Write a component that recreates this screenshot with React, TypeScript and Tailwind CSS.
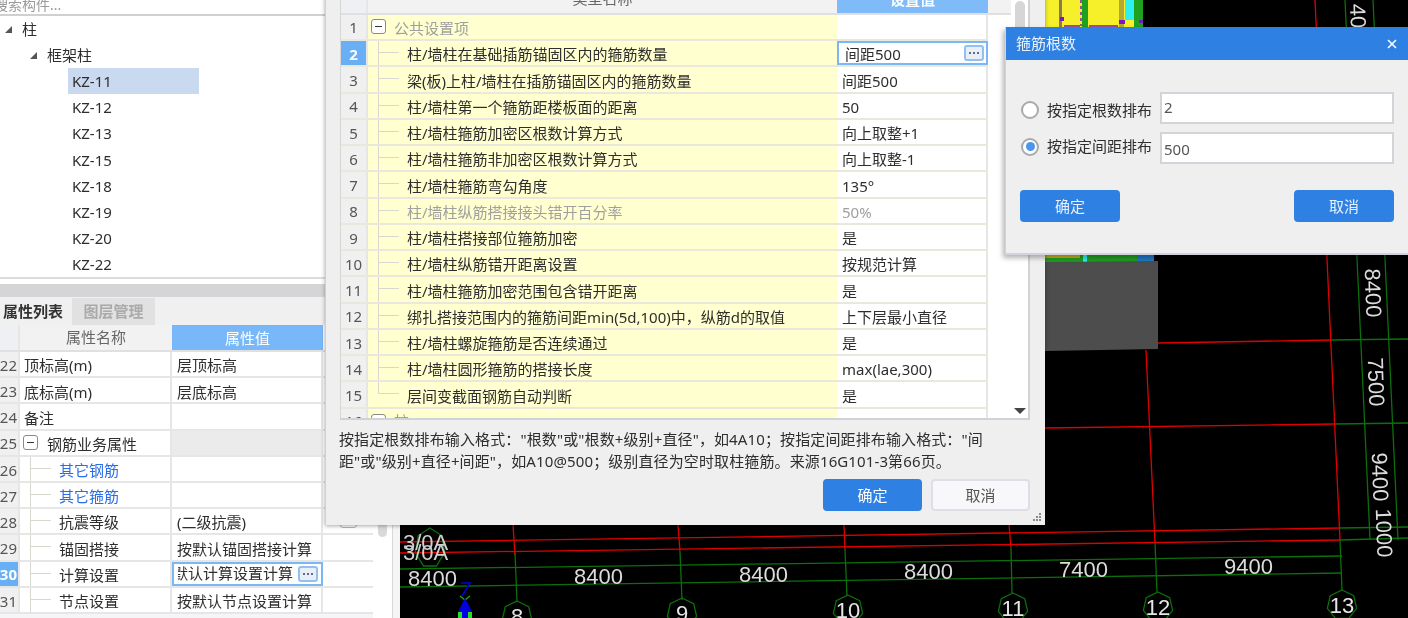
const FONT = "[font-family:'Noto_Sans','Noto_Sans_CJK_SC',sans-serif]";

const kzList = ["KZ-11", "KZ-12", "KZ-13", "KZ-15", "KZ-18", "KZ-19", "KZ-20", "KZ-22"];

const settings: [string, string][] = [
  ["柱/墙柱在基础插筋锚固区内的箍筋数量", "间距500"],
  ["梁(板)上柱/墙柱在插筋锚固区内的箍筋数量", "间距500"],
  ["柱/墙柱第一个箍筋距楼板面的距离", "50"],
  ["柱/墙柱箍筋加密区根数计算方式", "向上取整+1"],
  ["柱/墙柱箍筋非加密区根数计算方式", "向上取整-1"],
  ["柱/墙柱箍筋弯勾角度", "135°"],
  ["柱/墙柱纵筋搭接接头错开百分率", "50%"],
  ["柱/墙柱搭接部位箍筋加密", "是"],
  ["柱/墙柱纵筋错开距离设置", "按规范计算"],
  ["柱/墙柱箍筋加密范围包含错开距离", "是"],
  ["绑扎搭接范围内的箍筋间距min(5d,100)中，纵筋d的取值", "上下层最小直径"],
  ["柱/墙柱螺旋箍筋是否连续通过", "是"],
  ["柱/墙柱圆形箍筋的搭接长度", "max(lae,300)"],
  ["层间变截面钢筋自动判断", "是"],
];

function Minus({ empty = false }: { empty?: boolean }) {
  return (
    <span className="flex h-[15px] w-[15px] shrink-0 items-center justify-center rounded-[3px] border border-[#8a8a8a] bg-white">
      {!empty && <span className="h-px w-[7px] bg-[#333]" />}
    </span>
  );
}

function Dots() {
  return (
    <span className="flex h-[16px] w-[20px] shrink-0 items-center justify-center gap-[2px] rounded-[3px] border-2 border-[#8fc1f4] bg-[#e9eef7]">
      <span className="h-[2px] w-[2px] bg-[#5a6f8a]" />
      <span className="h-[2px] w-[2px] bg-[#5a6f8a]" />
      <span className="h-[2px] w-[2px] bg-[#5a6f8a]" />
    </span>
  );
}

function Connector({ last = false }: { last?: boolean }) {
  return (
    <div className={`${last ? "h-1/2" : "h-full"} w-[21px] shrink-0 self-start border-l border-[#d8d8d0]`}>
      <div className={`${last ? "h-full" : "h-1/2"} border-b border-[#d8d8d0]`} />
    </div>
  );
}

function Tri() {
  return (
    <svg width="7" height="7" viewBox="0 0 7 7" className="shrink-0">
      <polygon points="7,0 7,7 0,7" fill="#555" />
    </svg>
  );
}

function TreePanel() {
  return (
    <div className="flex h-[261px] flex-col overflow-hidden bg-white text-[15px] text-[#2e2e2e]">
      <div className="flex h-[26.15px] shrink-0 items-center gap-[10px] pl-[5px]">
        <Tri />
        <span>柱</span>
      </div>
      <div className="flex h-[26.15px] shrink-0 items-center gap-[10px] pl-[30px]">
        <Tri />
        <span>框架柱</span>
      </div>
      {kzList.map((k, i) => (
        <div key={k} className="flex h-[26.15px] shrink-0 items-center pl-[68px]">
          <span className={`flex h-full w-[131px] items-center pl-[4px] ${i === 0 ? "bg-[#c9d9f0]" : ""}`}>{k}</span>
        </div>
      ))}
    </div>
  );
}

type Prop = { n: number; name: string; val?: string; kind?: "plain" | "group" | "child" | "blue" | "edit"; mark?: boolean };
const props: Prop[] = [
  { n: 22, name: "顶标高(m)", val: "层顶标高" },
  { n: 23, name: "底标高(m)", val: "层底标高" },
  { n: 24, name: "备注" },
  { n: 25, name: "钢筋业务属性", kind: "group" },
  { n: 26, name: "其它钢筋", kind: "blue" },
  { n: 27, name: "其它箍筋", kind: "blue" },
  { n: 28, name: "抗震等级", val: "(二级抗震)", kind: "child", mark: true },
  { n: 29, name: "锚固搭接", val: "按默认锚固搭接计算", kind: "child" },
  { n: 30, name: "计算设置", val: "按默认计算设置计算", kind: "edit" },
  { n: 31, name: "节点设置", val: "按默认节点设置计算", kind: "child" },
];

function PropRow({ p }: { p: Prop }) {
  const nested = p.kind === "child" || p.kind === "blue" || p.kind === "edit";
  return (
    <div className="flex h-[26.2px] shrink-0 border-b-2 border-[#e6e6e6] bg-white">
      <div
        className={`flex w-[20px] shrink-0 items-center justify-end overflow-hidden border-r-2 border-[#e6e6e6] text-[15px] ${
          p.kind === "edit" ? "bg-[#69aff5] font-bold text-white" : "bg-[#f0f0f0] text-[#555]"
        }`}
      >
        <span className="mt-[2px] pr-px">{p.n}</span>
      </div>
      <div className="flex w-[152px] shrink-0 items-center border-r-2 border-[#e6e6e6]">
        {p.kind === "group" && (
          <>
            <span className="ml-[3px]"><Minus /></span>
            <span className="ml-[9px] mt-[3px]">{p.name}</span>
          </>
        )}
        {nested && (
          <>
            <div className="ml-[10px] h-full"><Connector /></div>
            <span className={`ml-[8px] mt-[3px] ${p.kind === "blue" ? "text-[#2a6de8]" : ""}`}>{p.name}</span>
          </>
        )}
        {!p.kind && <span className="ml-[4px] mt-[3px]">{p.name}</span>}
      </div>
      {p.kind === "edit" ? (
        <div className="flex w-[151px] shrink-0 items-center gap-[5px] border-2 border-[#7ab8f5] pl-[4px]">
          <div className="flex w-[115px] shrink-0 justify-end overflow-hidden whitespace-nowrap">{p.val}</div>
          <Dots />
        </div>
      ) : (
        <div
          className={`flex w-[151px] shrink-0 items-center whitespace-nowrap border-r-2 border-[#e6e6e6] pl-[5px] ${
            p.kind === "group" ? "bg-[#ebebeb]" : ""
          }`}
        >
          <span className="mt-[3px]">{p.val}</span>
        </div>
      )}
      <div className="flex w-[50px] shrink-0 items-center justify-center">
        {p.mark && <span className="h-[14px] w-[17px] rounded-[3px] border border-[#b5b5b5]" />}
      </div>
    </div>
  );
}

function LeftPanel() {
  return (
    <div className="flex h-[618px] w-[400px] shrink-0 bg-[#f5f5f7]">
      <div className="flex w-[393px] shrink-0 flex-col border-r border-[#d8d8d8]">
        <div className="h-[16px] shrink-0 overflow-hidden border-b-2 border-[#cfd0d4] bg-white text-[14px] leading-[10px] text-[#9a9a9a]">
          <span className="-ml-[6px] block whitespace-nowrap">搜索构件...</span>
        </div>
        <TreePanel />
        <div className="h-[7px] shrink-0 border-t-2 border-[#dcdcde] bg-white" />
        <div className="h-[13px] shrink-0 bg-[#d5d5d7]" />
        <div className="flex h-[28px] shrink-0 items-stretch bg-[#f0f0f0] pt-px text-[15px]">
          <div className="flex w-[72px] items-center pl-[3px] font-bold text-[#333]">属性列表</div>
          <div className="flex w-[83px] items-center justify-center bg-[#e1e1e1] font-bold text-[#aaa]">图层管理</div>
        </div>
        <div className="flex min-h-0 flex-1 text-[15px] text-[#2e2e2e]">
          <div className="flex w-[373px] shrink-0 flex-col">
            <div className="flex h-[27px] shrink-0 border-b-2 border-[#e0e0e0] bg-[#f2f2f2]">
              <div className="w-[20px] shrink-0 border-r-2 border-[#e6e6e6] bg-[#eff0f3]" />
              <div className="flex w-[152px] shrink-0 items-center justify-center text-[#666]">属性名称</div>
              <div className="flex w-[151px] shrink-0 items-center justify-center bg-[#79b8f8] pt-[2px] text-white">属性值</div>
              <div className="w-[50px] shrink-0 bg-white" />
            </div>
            {props.map((p) => (
              <PropRow key={p.n} p={p} />
            ))}
          </div>
          <div className="flex flex-1 justify-center bg-white">
            <div className="h-[212px] w-[9px] rounded-full bg-[#d9d9d9]" />
          </div>
        </div>
      </div>
    </div>
  );
}

function SettingsDialog() {
  return (
    <div className="absolute left-[325px] top-[-13px] flex h-[538px] w-[720px] flex-col border-l border-[#d0d0d0] bg-[#efefef] pl-[14px] text-[15px] text-[#2e2e2e] shadow-[0_1px_4px_rgba(0,0,0,0.35)]">
      <div className="flex h-[433px] w-[690px] shrink-0 border-b-2 border-l border-r-2 border-[#cfd2d6] border-l-[#d6d6d6] bg-white">
        <div className="flex w-[670px] shrink-0 flex-col overflow-hidden">
          <div className="flex h-[27.8px] shrink-0 border-b-2 border-[#e0e0e0] bg-[#f2f2f2]">
            <div className="w-[27px] shrink-0 border-r-2 border-[#e6e6e6] bg-[#eff0f3]" />
            <div className="flex w-[469px] shrink-0 items-center justify-center pb-[4px] text-[#666]">类型名称</div>
            <div className="flex w-[151px] shrink-0 items-center justify-center bg-[#7fbbf9] pb-[2px] font-bold text-white">设置值</div>
          </div>
          <div className="flex h-[26.25px] w-[647px] shrink-0 border-b-2 border-[#e8e8dc]">
            <div className="flex w-[27px] shrink-0 items-center justify-center border-r-2 border-[#e6e6e6] bg-[#f0f0f0] text-[#555]">1</div>
            <div className="flex w-[469px] shrink-0 items-center bg-[#ffffcf] pl-[3px] text-[#a0a0a0]">
              <Minus />
              <span className="ml-[8px] mt-[2px]">公共设置项</span>
            </div>
            <div className="w-[151px] shrink-0 border-r-2 border-[#e6e6e6]" />
          </div>
          {settings.map(([name, val], i) => {
            const n = i + 2;
            const sel = n === 2;
            const muted = n === 8;
            return (
              <div key={n} className="flex h-[26.25px] w-[647px] shrink-0 border-b-2 border-[#e8e8dc]">
                <div
                  className={`flex w-[27px] shrink-0 items-center justify-center border-r-2 border-[#e6e6e6] ${
                    sel ? "bg-[#69aff5] font-bold text-white" : "bg-[#f0f0f0] text-[#555]"
                  }`}
                >
                  <span className="mt-[2px]">{n}</span>
                </div>
                <div className={`flex w-[469px] shrink-0 items-center whitespace-nowrap bg-[#ffffcf] pl-[10px] ${muted ? "text-[#a0a0a0]" : ""}`}>
                  <Connector last={n === 15} />
                  <span className="ml-[8px] mt-[3px]">{name}</span>
                </div>
                {sel ? (
                  <div className="flex w-[151px] shrink-0 items-center justify-between border-2 border-[#7ab8f5] pl-[6px] pr-[2px]">
                    <span className="mt-[2px]">{val}</span>
                    <Dots />
                  </div>
                ) : (
                  <div className={`flex w-[151px] shrink-0 items-center border-r-2 border-[#e6e6e6] pl-[5px] ${muted ? "text-[#a0a0a0]" : ""}`}>
                    <span className="mt-[3px]">{val}</span>
                  </div>
                )}
              </div>
            );
          })}
          <div className="flex h-[26.2px] w-[647px] shrink-0">
            <div className="flex w-[27px] shrink-0 items-center justify-center border-r-2 border-[#e6e6e6] bg-[#f0f0f0] text-[#555]">16</div>
            <div className="flex w-[469px] shrink-0 items-center bg-[#ffffcf] pl-[3px] text-[#a0a0a0]">
              <Minus empty />
              <span className="ml-[8px]">柱</span>
            </div>
            <div className="w-[151px] shrink-0 border-r-2 border-[#e6e6e6]" />
          </div>
        </div>
        <div className="flex flex-1 flex-col items-center justify-between pb-[4px] pt-[14px]">
          <div className="h-[42px] w-[10px] rounded-full bg-[#d6d6d6]" />
          <svg width="12" height="6" viewBox="0 0 12 6">
            <polygon points="0,0 12,0 6,6" fill="#444" />
          </svg>
        </div>
      </div>
      <div className="-ml-px flex flex-col pt-[8px] text-[15px] leading-[22px] tracking-[0.12px]">
        <div className="whitespace-nowrap">按指定根数排布输入格式："根数"或"根数+级别+直径"，如4A10；按指定间距排布输入格式："间</div>
        <div className="whitespace-nowrap">距"或"级别+直径+间距"，如A10@500；级别直径为空时取柱箍筋。来源16G101-3第66页。</div>
      </div>
      <div className="flex w-[690px] justify-end gap-[9px] pt-[7px]">
        <button className="h-[32px] w-[99px] rounded-[4px] bg-[#2e80e2] text-[15px] text-white">确定</button>
        <button className="h-[32px] w-[99px] rounded-[4px] border-2 border-[#dcdfe6] bg-[#f8f8fa] text-[15px] text-[#555]">取消</button>
      </div>
      <svg width="10" height="10" viewBox="0 0 10 10" className="absolute bottom-[3px] right-[3px]">
        {[[7, 1], [4, 4], [7, 4], [1, 7], [4, 7], [7, 7]].map(([x, y]) => (
          <rect key={`${x}-${y}`} x={x} y={y} width="2" height="2" fill="#8a8a8a" />
        ))}
      </svg>
    </div>
  );
}

function Radio({ on }: { on?: boolean }) {
  return (
    <span
      className={`flex h-[18px] w-[18px] shrink-0 items-center justify-center rounded-full border-2 border-[#a9a9a9] bg-white ${
        on ? "mb-[3px]" : "mt-[4px]"
      }`}
    >
      {on && <span className="h-[9px] w-[9px] rounded-full bg-[#4b95ee]" />}
    </span>
  );
}

function CountDialog() {
  const rows: [string, string, boolean][] = [
    ["按指定根数排布", "2", false],
    ["按指定间距排布", "500", true],
  ];
  return (
    <div className="absolute left-[1005px] top-[27px] flex h-[228px] w-[403px] flex-col border-b-2 border-l border-[#d0d4da] bg-[#efefef] text-[15px] text-[#2e2e2e] shadow-[-2px_3px_5px_rgba(0,0,0,0.3)]">
      <div className="flex h-[33px] shrink-0 items-center justify-between bg-[#2e80e2] pl-[10px] pr-[11px] text-[#e8f0fb]">
        <span>箍筋根数</span>
        <svg width="10" height="10" viewBox="0 0 10 10">
          <path d="M1 1 L9 9 M9 1 L1 9" stroke="#fff" strokeWidth="1.6" />
        </svg>
      </div>
      <div className="flex flex-col gap-[8px] pl-[15px] pr-[14px] pt-[32px]">
        {rows.map(([l, v, on]) => (
          <div key={l} className="flex h-[32px] items-center">
            <Radio on={on} />
            <span className={`ml-[8px] w-[113px] shrink-0 whitespace-nowrap ${on ? "mb-[3px]" : "mt-[4px]"}`}>{l}</span>
            <div className={`flex h-full flex-1 items-center border-2 border-[#d2d4da] bg-white pl-[2px] text-[#555] ${on ? "pt-[2px]" : "pb-[1px]"}`}>{v}</div>
          </div>
        ))}
      </div>
      <div className="flex justify-between pl-[14px] pr-[14px] pt-[26px]">
        <button className="h-[32px] w-[100px] rounded-[4px] bg-[#2e80e2] text-[15px] text-[#e8f0fb]">确定</button>
        <button className="h-[32px] w-[100px] rounded-[4px] bg-[#2e80e2] text-[15px] text-[#e8f0fb]">取消</button>
      </div>
    </div>
  );
}

const RED = "#e00000";
const GREEN = "#0b700b";
const CAD = "Liberation Sans, sans-serif";
const lines: [number, number, number, number, string][] = [
  [400, 542, 1340, 528, RED],
  [400, 553, 1340, 540, RED],
  [1158, 343, 1330, 340, RED],
  [1045, 428, 1335, 424, RED],
  [1330, 340, 1408, 339, GREEN],
  [1335, 424, 1408, 423, GREEN],
  [1340, 528, 1408, 527, GREEN],
  [1340, 540, 1408, 538, GREEN],
  [513, 525, 515, 555, RED],
  [678, 525, 680, 552, RED],
  [844, 525, 845, 550, RED],
  [1009, 525, 1011, 548, RED],
  [1146, 350, 1155, 543, RED],
  [1315, 0, 1340, 540, RED],
  [515, 553, 517, 602, GREEN],
  [680, 552, 682, 600, GREEN],
  [845, 550, 847, 596, GREEN],
  [1011, 548, 1012, 594, GREEN],
  [1155, 543, 1157, 592, GREEN],
  [1340, 540, 1342, 590, GREEN],
  [1345, 0, 1370, 539, GREEN],
  [1373, 0, 1398, 540, GREEN],
  [400, 569, 1342, 556, GREEN],
  [400, 587, 1342, 573, GREEN],
];

function Hept({ cx, cy, rx = 15, ry = 15, label }: { cx: number; cy: number; rx?: number; ry?: number; label?: string }) {
  const pts = Array.from({ length: 7 }, (_, i) => {
    const a = -Math.PI / 2 + (i * 2 * Math.PI) / 7;
    return `${cx + rx * Math.cos(a)},${cy + ry * Math.sin(a)}`;
  }).join(" ");
  return (
    <g>
      <polygon points={pts} fill="none" stroke={GREEN} strokeWidth="1.3" />
      {label && (
        <text x={cx} y={cy + 8} textAnchor="middle" fontSize="22" fill="#e6e6e6" fontFamily={CAD}>
          {label}
        </text>
      )}
    </g>
  );
}

function Canvas() {
  const hTexts: [string, number, number][] = [
    ["8400", 408, 586],
    ["8400", 574, 584],
    ["8400", 739, 582],
    ["8400", 904, 579],
    ["7400", 1059, 577],
    ["9400", 1224, 574],
  ];
  const vTexts: [string, number, number][] = [
    ["40", 1358, 16],
    ["8400", 1373, 293],
    ["7500", 1376, 382],
    ["9400", 1380, 477],
    ["1000", 1384, 533],
  ];
  return (
    <div className="h-[618px] flex-1 overflow-hidden bg-black">
      <svg width="1008" height="618" viewBox="400 0 1008 618" className="block">
        <rect x="1045" y="0" width="89" height="27" fill="#f5f02a" />
        <rect x="1059" y="0" width="3" height="27" fill="#8a7a50" />
        <rect x="1082" y="0" width="6" height="27" fill="#1fa01f" />
        <rect x="1119" y="0" width="5" height="27" fill="#b5aa30" />
        <rect x="1125" y="0" width="9" height="20" fill="#2ff0f0" />
        <rect x="1134" y="0" width="9" height="27" fill="#1fa01f" />
        <rect x="1060" y="17" width="4" height="4" fill="#7a18c8" />
        <rect x="1119" y="20" width="6" height="4" fill="#7a18c8" />
        <rect x="1139" y="20" width="4" height="3" fill="#7a18c8" />
        <path d="M1081 0 V26" stroke="#7a18c8" strokeWidth="1.5" strokeDasharray="3 3" fill="none" />
        <path d="M1064 26 H1080 M1089 26 H1118" stroke="#7a18c8" strokeWidth="1.5" fill="none" />
        <rect x="1045" y="255" width="109" height="7" fill="#1fa01f" />
        <rect x="1045" y="255" width="35" height="3" fill="#c9b020" />
        <rect x="1083" y="255" width="4" height="7" fill="#2ff0f0" />
        <rect x="1137" y="255" width="17" height="6" fill="#1f78c8" />
        <polygon points="1045,262 1158,261 1158,349 1045,351" fill="#4d4d4d" />
        {lines.map(([a, b, c, d, col], i) => (
          <line key={i} x1={a} y1={b} x2={c} y2={d} stroke={col} strokeWidth="1.3" />
        ))}
        <Hept cx={430} cy={548} rx={15} ry={20} />
        <text x="403" y="550" fontSize="22" fill="#cfcfcf" fontFamily={CAD}>3/0A</text>
        <text x="403" y="560" fontSize="22" fill="#cfcfcf" fontFamily={CAD}>3/0A</text>
        {hTexts.map(([t, x, y]) => (
          <text key={`${t}${x}`} x={x} y={y} fontSize="22" fill="#dcdcdc" fontFamily={CAD}>{t}</text>
        ))}
        {vTexts.map(([t, x, y]) => (
          <text
            key={`${t}${y}`}
            x={x}
            y={y}
            fontSize="22"
            fill="#dcdcdc"
            textAnchor="middle"
            dominantBaseline="central"
            fontFamily={CAD}
            transform={`rotate(88 ${x} ${y})`}
          >
            {t}
          </text>
        ))}
        <Hept cx={517} cy={616} label="8" />
        <Hept cx={682} cy={613} label="9" />
        <Hept cx={848} cy={610} label="10" />
        <Hept cx={1013} cy={608} label="11" />
        <Hept cx={1158} cy={607} label="12" />
        <Hept cx={1342} cy={605} label="13" />
        <path d="M461 583 H470 L462 596" stroke="#0000e0" strokeWidth="1.5" fill="none" />
        <path d="M460 596 L465 600 L470 596" stroke="#18a018" strokeWidth="1.5" fill="none" />
        <polygon points="465,598 471,610 472,618 458,618 459,610" fill="#0000e0" />
        <rect x="458" y="612" width="4" height="6" fill="#22e022" />
        <rect x="468" y="612" width="4" height="6" fill="#22e022" />
      </svg>
    </div>
  );
}

export default function App() {
  return (
    <div className={`relative flex h-[618px] w-[1408px] overflow-hidden bg-black text-[15px] blur-[0.35px] ${FONT}`}>
      <LeftPanel />
      <Canvas />
      <SettingsDialog />
      <CountDialog />
    </div>
  );
}
